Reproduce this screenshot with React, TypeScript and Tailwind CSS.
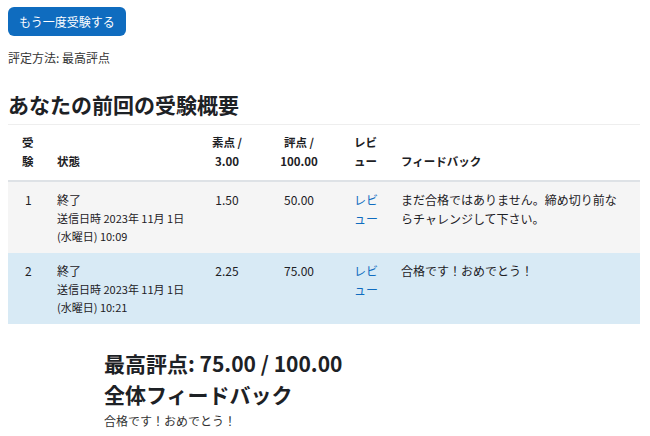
import React from 'react'

const attempts = [
  { no: 1, state: '終了', date: '送信日時 2023年 11月 1日', time: '(水曜日) 10:09', raw: '1.50', grade: '50.00', feedback: ['まだ合格ではありません。締め切り前な', 'らチャレンジして下さい。'], bg: 'bg-[#f5f5f5]' },
  { no: 2, state: '終了', date: '送信日時 2023年 11月 1日', time: '(水曜日) 10:21', raw: '2.25', grade: '75.00', feedback: ['合格です！おめでとう！'], bg: 'bg-[#d8eaf5]' },
]

export default function App() {
  return (
    <div className="min-h-screen bg-white px-2 pt-[7px] text-[#1d2125] font-['Noto_Sans_CJK_JP','Noto_Sans',sans-serif]">
      <button className="h-[29px] rounded-[6px] bg-[#0f6cbf] px-[11px] text-[12px] leading-[29px] text-white">
        もう一度受験する
      </button>

      <p className="mt-[13px] text-[12px] leading-[18px] text-[#333]">評定方法: 最高評点</p>

      <h3 className="mt-[23px] text-[21px] font-bold leading-[28px]">あなたの前回の受験概要</h3>

      <table className="mt-[6px] w-[632px] table-fixed border-collapse text-[12px]">
        <thead>
          <tr className="border-t border-[#eeeeee] border-b-2 border-b-[#dee2e6]">
            <th className="w-[37px] pb-[9px] pl-[14px] pt-[8px] text-left align-bottom font-bold leading-[19px] text-[11.5px]">受<br />験</th>
            <th className="w-[155px] pb-[9px] pl-[12px] text-left align-bottom font-bold leading-[19px] text-[11.5px]">状態</th>
            <th className="w-[54px] pb-[9px] text-center align-bottom font-bold leading-[19px] text-[11.5px]">素点 /<br />3.00</th>
            <th className="w-[90px] pb-[9px] text-center align-bottom font-bold leading-[19px] text-[11.5px]">評点 /<br />100.00</th>
            <th className="w-[47px] pb-[9px] pl-[10px] text-left align-bottom font-bold leading-[19px] text-[11.5px]">レビ<br />ュー</th>
            <th className="pb-[9px] pl-[10px] text-left align-bottom font-bold leading-[19px] text-[11.5px]">フィードバック</th>
          </tr>
        </thead>
        <tbody>
          {attempts.map((a) => (
            <tr key={a.no} className={a.bg}>
              <td className="pl-[17px] pt-[8px] pb-[8px] align-top leading-[19px]">{a.no}</td>
              <td className="pl-[12px] pt-[8px] pb-[8px] align-top leading-[19px]">
                <div>{a.state}</div>
                <div className="text-[11px] leading-[18px]">{a.date}</div>
                <div className="text-[11px] leading-[18px]">{a.time}</div>
              </td>
              <td className="pt-[8px] text-center align-top leading-[19px]">{a.raw}</td>
              <td className="pt-[8px] text-center align-top leading-[19px]">{a.grade}</td>
              <td className="pl-[10px] pt-[8px] align-top leading-[19px] text-[#0f6cbf]">レビ<br />ュー</td>
              <td className="pl-[10px] pt-[8px] align-top leading-[19px]">
                {a.feedback.map((line) => (
                  <div key={line}>{line}</div>
                ))}
              </td>
            </tr>
          ))}
        </tbody>
      </table>

      <div className="ml-[96px] mt-[24px]">
        <h3 className="text-[21px] font-bold leading-[30px]">最高評点: 75.00 / 100.00</h3>
        <h3 className="text-[21px] font-bold leading-[32px]">全体フィードバック</h3>
        <p className="mt-[1px] text-[12px] leading-[20px] text-[#333]">合格です！おめでとう！</p>
      </div>
    </div>
  )
}
